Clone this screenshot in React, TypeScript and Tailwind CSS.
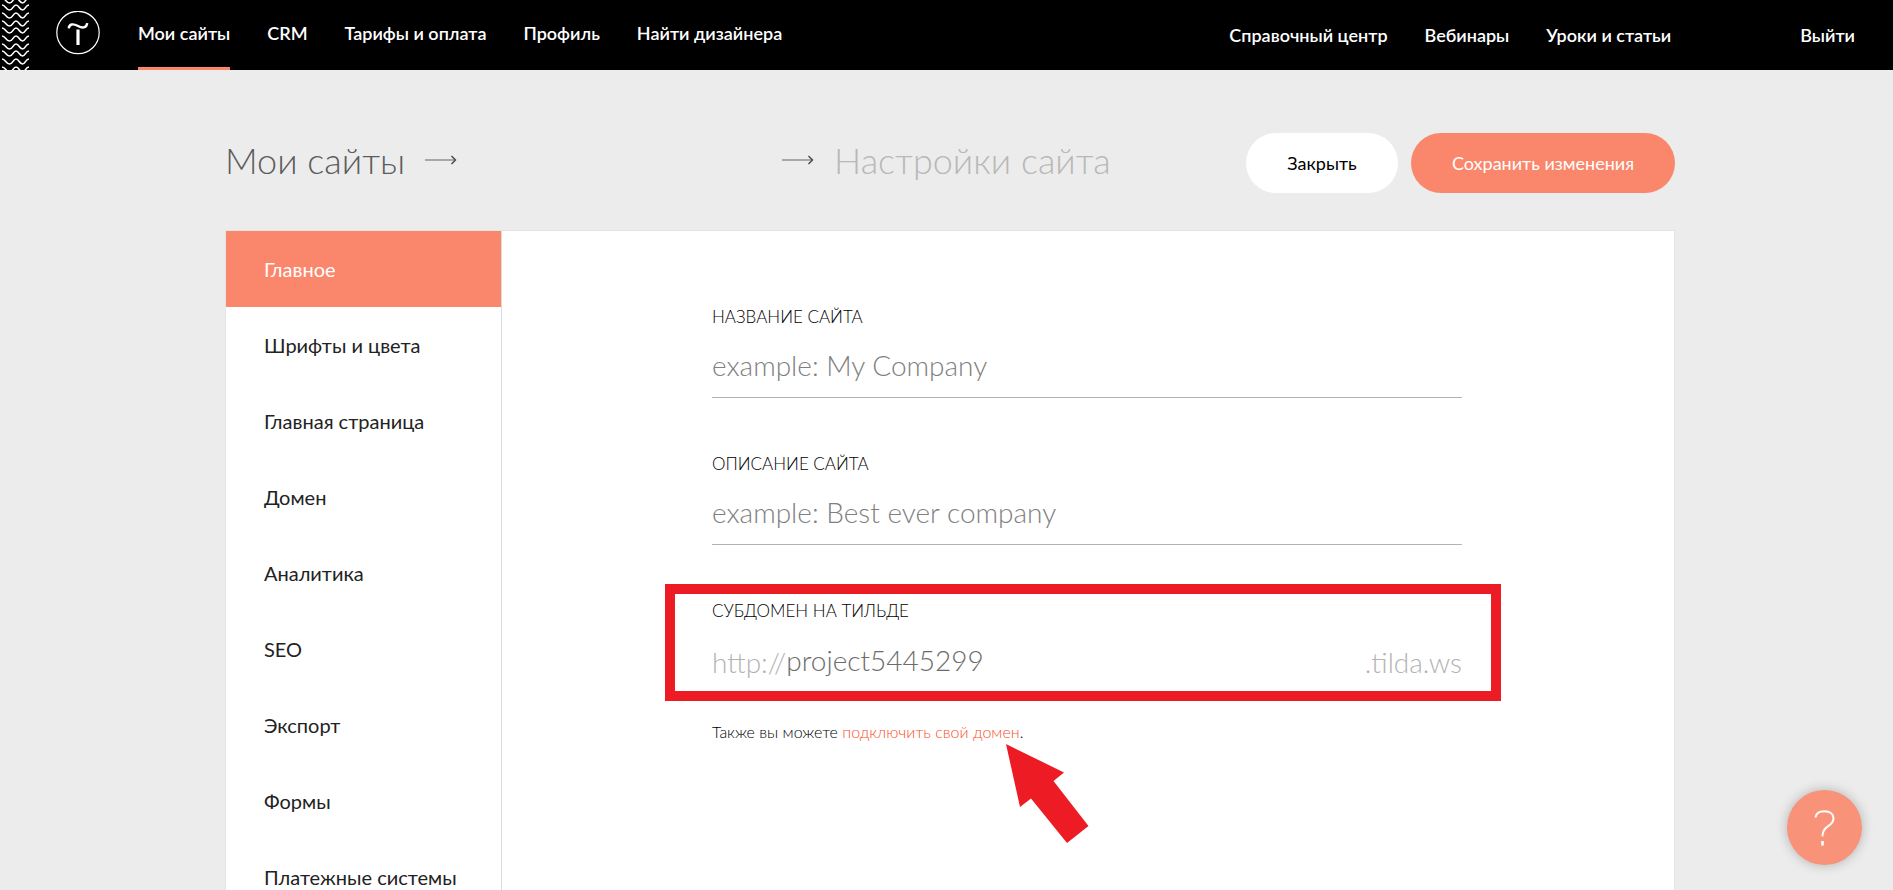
import { useState } from "react";

interface NavLink {
  label: string;
  active?: boolean;
}

const mainLinks: NavLink[] = [
  { label: "Мои сайты", active: true },
  { label: "CRM" },
  { label: "Тарифы и оплата" },
  { label: "Профиль" },
  { label: "Найти дизайнера" },
];

const helpLinks = ["Справочный центр", "Вебинары", "Уроки и статьи"];

const sections = [
  "Главное",
  "Шрифты и цвета",
  "Главная страница",
  "Домен",
  "Аналитика",
  "SEO",
  "Экспорт",
  "Формы",
  "Платежные системы",
];

// Y offsets of the decorative waves in the header corner
const waveRows = [0, 7, 15, 23, 30, 38, 46, 53, 61, 69];

function Waves() {
  return (
    <svg width="29" height="70" viewBox="0 0 29 70" fill="none" stroke="#fff" strokeWidth="1.6">
      {waveRows.map((y) => (
        <path
          key={y}
          d={`M2 ${y - 2} C5.5 ${y - 2} 6 ${y + 3} 9.5 ${y + 3} S13 ${y - 2} 16 ${y - 2} S19.5 ${y + 3} 22.5 ${y + 3} S25.5 ${y - 2} 29 ${y - 2}`}
        />
      ))}
    </svg>
  );
}

function Logo() {
  return (
    <svg width="44" height="44" viewBox="0 0 44 44" fill="none" stroke="#fff">
      <circle cx="22" cy="21.5" r="21.2" strokeWidth="1.2" />
      <path d="M12.8 17.4 C13 12.6 17.5 12.6 21.5 14.8 C26 17.2 30.6 17.6 31.2 12.2" strokeWidth="2.4" />
      <path d="M22 18.5 V34" strokeWidth="3.2" />
    </svg>
  );
}

function Arrow() {
  return (
    <svg width="32" height="10" viewBox="0 0 32 10" fill="none">
      <path d="M0 5 H30" stroke="#a8a8a8" strokeWidth="2" />
      <path d="M26.5 1 L30.5 5 L26.5 9" stroke="#444" strokeWidth="1.4" />
    </svg>
  );
}

export default function App() {
  const [active, setActive] = useState("Главное");
  const [title, setTitle] = useState("");
  const [description, setDescription] = useState("");
  const [subdomain, setSubdomain] = useState("project5445299");

  return (
    <div className="flex h-screen flex-col overflow-hidden bg-[#ececec] font-[Lato,sans-serif] text-black">
      {/* Top bar */}
      <header className="flex h-[70px] shrink-0 bg-black text-lg font-semibold text-white">
        <Waves />
        <a href="#" aria-label="Tilda" className="ml-[27px] pt-[11px]">
          <Logo />
        </a>
        <nav className="ml-[38px] flex gap-[37px]">
          {mainLinks.map((link) => (
            <a
              key={link.label}
              href="#"
              className={
                link.active
                  ? "border-b-[3px] border-[#fa876b] leading-[67px]"
                  : "leading-[67px]"
              }
            >
              {link.label}
            </a>
          ))}
        </nav>
        <nav className="ml-auto flex gap-[37px] pr-[38px] leading-[71px]">
          {helpLinks.map((label) => (
            <a key={label} href="#">
              {label}
            </a>
          ))}
          <a href="#" className="ml-[92px]">
            Выйти
          </a>
        </nav>
      </header>

      <div className="flex min-h-0 flex-1 flex-col pl-[7px]">
        <div className="mx-auto flex min-h-0 w-full max-w-[1450px] flex-1 flex-col">
          {/* Breadcrumbs and actions */}
          <div className="flex items-center pt-[63px] pb-[37px]">
            <div className="flex items-center pb-[6px]">
              <a href="#" className="text-4xl font-light text-[#5c5c5c]">
                Мои сайты
              </a>
              <span className="ml-5">
                <Arrow />
              </span>
              <span className="ml-[325px]">
                <Arrow />
              </span>
              <h1 className="ml-5 text-4xl font-light text-[#b8b8b8]">Настройки сайта</h1>
            </div>
            <div className="ml-auto flex gap-[13px] text-lg">
              <button className="h-[60px] w-[152px] rounded-full bg-white">Закрыть</button>
              <button className="h-[60px] w-[264px] rounded-full bg-[#fa876b] text-white">
                Сохранить изменения
              </button>
            </div>
          </div>

          <div className="flex min-h-0 flex-1 border-x border-t border-[#e4e4e4] bg-white">
            <aside className="w-[276px] shrink-0 border-r border-[#dcdcdc]">
              {sections.map((section) => (
                <button
                  key={section}
                  onClick={() => setActive(section)}
                  className={
                    section === active
                      ? "block h-[76px] w-full bg-[#fa876b] pl-[38px] text-left text-xl text-white"
                      : "block h-[76px] w-full pl-[38px] text-left text-xl text-[#222]"
                  }
                >
                  {section}
                </button>
              ))}
            </aside>

            <main className="min-w-0 flex-1 pt-[74px] pr-6 pl-[210px]">
              <form className="flex max-w-[750px] flex-col gap-[54px]">
                <div>
                  <label htmlFor="title" className="block text-[17px] leading-6 font-light uppercase">
                    Название сайта
                  </label>
                  <input
                    id="title"
                    value={title}
                    onChange={(e) => setTitle(e.target.value)}
                    placeholder="example: My Company"
                    className="block h-[69px] w-full border-b border-[#b3b3b3] pt-1 text-[28px] font-light outline-none placeholder:text-[#808080]"
                  />
                </div>

                <div>
                  <label htmlFor="description" className="block text-[17px] leading-6 font-light uppercase">
                    Описание сайта
                  </label>
                  <input
                    id="description"
                    value={description}
                    onChange={(e) => setDescription(e.target.value)}
                    placeholder="example: Best ever company"
                    className="block h-[69px] w-full border-b border-[#b3b3b3] pt-1 text-[28px] font-light outline-none placeholder:text-[#808080]"
                  />
                </div>

                <div className="relative">
                  <label htmlFor="subdomain" className="block text-[17px] leading-6 font-light uppercase">
                    Субдомен на Тильде
                  </label>
                  <div className="flex h-[69px] items-center pt-1 text-[28px] font-light text-[#b3b3b3]">
                    <span className="pt-1">http://</span>
                    <input
                      id="subdomain"
                      value={subdomain}
                      onChange={(e) => setSubdomain(e.target.value)}
                      className="min-w-0 flex-1 text-[#6c6c6c] outline-none"
                    />
                    <span className="pt-1">.tilda.ws</span>
                  </div>
                  {/* Highlight frame around the subdomain */}
                  <div className="pointer-events-none absolute -top-[15px] -right-[39px] -left-[47px] h-[117px] border-10 border-[#ed1c24]" />
                </div>
              </form>

              <p className="relative mt-7 max-w-[750px] text-base font-light">
                Также вы можете{" "}
                <a href="#" className="text-[#fa4f2a]">
                  подключить свой домен
                </a>
                .
                <svg
                  className="pointer-events-none absolute top-6 left-[294px]"
                  width="83"
                  height="100"
                  viewBox="0 0 83 100"
                >
                  <path d="M0 0 L58 28.5 L47.5 37 L82.5 82 L61 99 L25 54.5 L14 63 Z" fill="#ed1c24" />
                </svg>
              </p>
            </main>
          </div>
        </div>
      </div>

      <button
        aria-label="Помощь"
        className="fixed right-[31px] bottom-[25px] flex size-[75px] items-center justify-center rounded-full bg-[#f89278] shadow-[0_0_12px_rgba(0,0,0,0.25)]"
      >
        <svg width="22" height="36" viewBox="0 0 22 36" fill="none" stroke="#fff">
          <path
            d="M1.5 7.5 C2 3.5 5.5 1.3 10.5 1.3 C16 1.3 19.5 4 19.5 8.3 C19.5 12.5 17 14.5 13.5 16.6 C10 18.8 8.5 21 8.5 26.5"
            strokeWidth="2"
          />
          <path d="M8.5 31 V35.5" strokeWidth="2.6" />
        </svg>
      </button>
    </div>
  );
}
